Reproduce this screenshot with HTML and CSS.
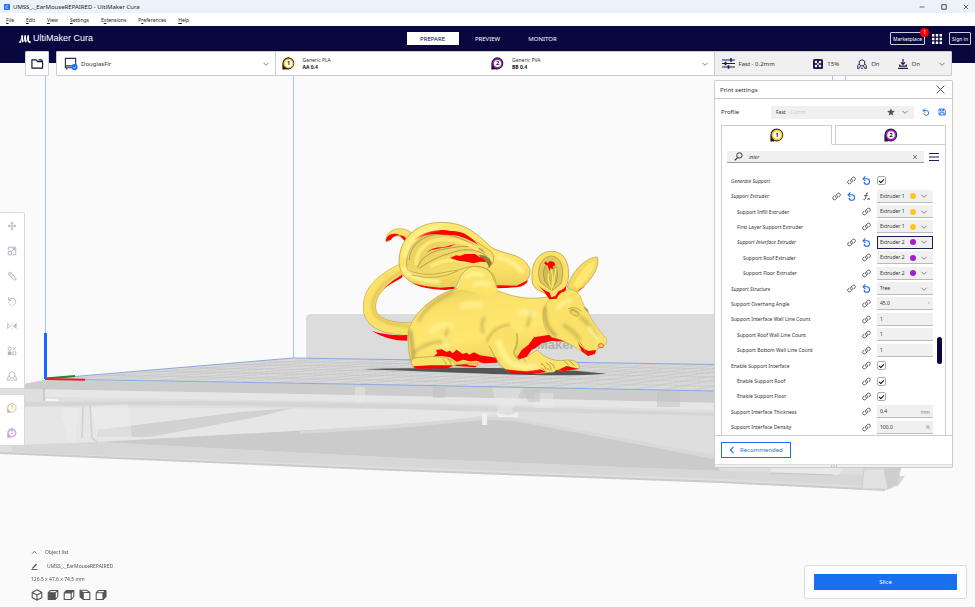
FILE: index.html
```html
<!DOCTYPE html>
<html lang="en">
<head>
<meta charset="utf-8">
<title>UMSS_._EarMouseREPAIRED - UltiMaker Cura</title>
<link rel="stylesheet" href="styles.css">
</head>
<body>
<svg class="defs" aria-hidden="true">
  <symbol id="chev" viewBox="0 0 8 8"><path d="M1.500 2.800 4 5.300 6.500 2.800" fill="none" stroke="#666" stroke-width=".8"/></symbol>
  <symbol id="link" viewBox="0 0 16 16"><g fill="none" stroke="#555" stroke-width="1.700" stroke-linecap="round"><path d="M7 9.800a3 3 0 0 1 0-4.200l3-3a3 3 0 0 1 4.200 4.200l-2 2"/><path d="M9 6.200a3 3 0 0 1 0 4.200l-3 3a3 3 0 0 1-4.200-4.200l2-2"/></g></symbol>
  <symbol id="undo" viewBox="0 0 16 16"><g fill="none" stroke="#1a6ef0" stroke-width="1.900"><path d="M2.500 5H8.500a4.900 4.900 0 1 1-4.900 5.500"/><path d="M6 .8 1.900 5 6 9.200"/></g></symbol>
  <symbol id="fx" viewBox="0 0 16 16"><path d="M11 2C7.500 1 7.500 4 7 7s-1 8-4.500 6.500M4 6.500h6M10 10.500l3.500 3.500M13.500 10.500 10 14" fill="none" stroke="#333" stroke-width="1.500"/></symbol>
  <symbol id="ext" viewBox="0 0 14 14"><path d="M7 .4A6.500 6.500 0 1 1 4 12.800V13.500H.4V7A6.600 6.600 0 0 1 7 .4Z" fill="#1c1c28"/><circle cx="7" cy="7" r="5.500" fill="currentColor"/><circle cx="7" cy="7" r="3.800" fill="#fff"/></symbol>
  <symbol id="cube" viewBox="0 0 12 12"><path d="M3.500 1.500h7.300v6L8.200 10.500H1.200V3.800ZM1.200 3.800h7v6.700M8.200 3.800l2.600-2.300" fill="none" stroke="#555" stroke-width="1.100" stroke-linejoin="round"/></symbol>
  <symbol id="arch" viewBox="0 0 14 14"><path d="M7 1 10.800 3v4L9 9.500H5L3.200 7V3ZM3.200 7 1 9v4M10.800 7 13 9v4M.5 13h3M5.500 13h3M10.500 13h3M3.500 12.500 5 9.500M10.500 12.500 9 9.500" fill="none" stroke="currentColor" stroke-width="1.300"/></symbol>
</svg>

<header class="titlebar">
  <svg class="app-icon" viewBox="0 0 6 6"><rect width="6" height="6" rx="1" fill="#1a6ef0"/><path d="M4.300 1.800H1.900v2.400h2.400" fill="none" stroke="#bcd6ff" stroke-width=".8"/></svg>
  <span>UMSS_._EarMouseREPAIRED - UltiMaker Cura</span>
  <div class="window-buttons">
    <button aria-label="Minimize"><svg viewBox="0 0 6 6"><path d="M.5 3h5" stroke="#333" stroke-width=".7"/></svg></button>
    <button aria-label="Maximize"><svg viewBox="0 0 6 6"><rect x=".8" y=".8" width="4.400" height="4.400" fill="none" stroke="#222" stroke-width=".8"/></svg></button>
    <button aria-label="Close"><svg viewBox="0 0 6 6"><path d="m.8.8 4.400 4.400M5.200.8.8 5.200" stroke="#222" stroke-width=".7"/></svg></button>
  </div>
</header>
<nav class="menubar">
  <a href="#"><u>F</u>ile</a><a href="#"><u>E</u>dit</a><a href="#"><u>V</u>iew</a><a href="#"><u>S</u>ettings</a><a href="#">E<u>x</u>tensions</a><a href="#">P<u>r</u>eferences</a><a href="#"><u>H</u>elp</a>
</nav>
<header class="topbar">
  <div class="brand">
    <svg viewBox="0 0 12 8"><g fill="none" stroke="#fff" stroke-width="1.700"><path d="M3.200.3v4.500q0 1.500 1 2.200M6.200.3v4.500q0 1.500 1 2.200M9.200.3v4.500q0 1.500 1 2.200"/><path d="M3.200 1 1.300 7M6.200 1 4.800 6M9.200 1 7.800 6" stroke-width=".9"/></g><circle cx="1.100" cy="6.900" r="1" fill="#fff"/><circle cx="10.900" cy="6.900" r="1" fill="#fff"/></svg>
    <span>UltiMaker Cura</span>
  </div>
  <nav class="stages"><button class="current">PREPARE</button><button>PREVIEW</button><button>MONITOR</button></nav>
  <div class="account">
    <button class="outline market">Marketplace<span class="badge">1</span></button>
    <button class="apps" aria-label="Applications"><svg viewBox="0 0 10 10" fill="#fff"><path d="M0 0h2.400v2.400H0zM3.800 0h2.400v2.400H3.800zM7.600 0H10v2.400H7.600zM0 3.800h2.400v2.400H0zM3.800 3.800h2.400v2.400H3.800zM7.600 3.800H10v2.400H7.600zM0 7.600h2.400V10H0zM3.800 7.600h2.400V10H3.800zM7.600 7.600H10V10H7.600z"/></svg></button>
    <button class="outline">Sign in</button>
  </div>
</header>

<main class="stage">
  <svg class="scene" viewBox="0 63 975 544" preserveAspectRatio="xMidYMid slice" role="img" aria-label="Build plate with model">
    <defs>
      <linearGradient id="body" x1="0" y1="0" x2=".35" y2="1"><stop offset="0" stop-color="#dcc75a"/><stop offset=".3" stop-color="#fbe169"/><stop offset=".7" stop-color="#ffe770"/><stop offset="1" stop-color="#ecd25b"/></linearGradient>
      <linearGradient id="earfill" x1="0" y1="0" x2="0" y2="1"><stop offset="0" stop-color="#ffe972"/><stop offset=".7" stop-color="#fbe066"/><stop offset="1" stop-color="#e6cc59"/></linearGradient>
      <linearGradient id="hollow" x1="0" y1="0" x2="1" y2="1"><stop offset="0" stop-color="#e2ca60"/><stop offset="1" stop-color="#fde46c"/></linearGradient>
      <filter id="soft" x="-20%" y="-20%" width="140%" height="140%"><feGaussianBlur stdDeviation="5"/></filter>
      <clipPath id="plate"><path d="M45 379 293 358 714 364.500V391L400 385Z"/></clipPath>
    </defs>
    <g fill="none" stroke="#9fc6f8" stroke-width="1"><path d="M45.500 76V336"/><path d="M293.500 76V358"/><path d="M832.500 76V90M845.500 76V90"/></g>
    <path d="M306 360V319q0-5 5-5H730v55Z" fill="#dcdcdc"/>
    <path d="M0 389 45 380 300 362 740 366V462L902 464 899 478Q896 490 885 490L870 490 720 482 395 470 0 453Z" fill="#dedede"/>
    <path d="M24 384 45 380 400 385 720 391V403L400 396 24 389Z" fill="#cdcdcd"/>
    <path d="M24 389 400 396 720 403V410L400 402 45 397Z" fill="#e6e6e6"/>
    <path d="M24 389H44V402H24Z" fill="#dedede"/><path d="M44 388V401" stroke="#b4b4b4"/>
    <path d="M46 398.500 56 399 60 401H46Z" fill="#f6f6f6"/>
    <path d="M24 402H60L200 401 400 404 720 413V416L400 409 200 405 24 406Z" fill="#d5d5d5"/>
    <path d="M24 407 400 409 500 413 400 427 110 443 24 446Z" fill="#e6e6e6"/>
    <path d="M97 430 240 412 292 408 262 416 150 437 97 437Z" fill="#d2d2d2"/>
    <path d="M500 412 720 417V460L640 445Z" fill="#dedede"/>
    <path d="M97 442 400 425 485 418 520 420 714 459 720 471 400 458Z" fill="#cbcbcb"/>
    <path d="M400 424 485 417 515 418 720 456V460L515 421 485 420 400 428 300 434V431Z" fill="#d8d8d8"/>
    <path d="M12 445 97 442 400 458 720 471 905 476 898 486 870 486 720 479 395 467 12 452Z" fill="#d7d7d7"/>
    <path d="M0 453 395 470 720 482 885 490" fill="none" stroke="#cbcbcb" stroke-width="2"/>
    <path d="M60 408H78L75 444 68 440ZM91 406 97 437 110 440 132 437 128 404Z" fill="#efefef" opacity=".4"/>
    <path d="M83 407 82 438M90 406 92 438 97 442" fill="none" stroke="#d0d0d0" stroke-width="1.500"/>
    <path d="M355 387H365V402H355ZM492 388 498 412H512L522 388ZM535 393H553V408H535Z" fill="#ececec" opacity=".45"/>
    <path d="M433 387H445V398H433ZM657 391H680V407H657ZM524 389H540V402H528Z" fill="#c2c2c2" opacity=".5"/>
    <path d="M482 413H487V425H482ZM496 412Q507 418 518 412V417H498Z" fill="#f0f0f0"/>
    <path d="M771 467H843Q842 476 833 475L771 473Z" fill="#e8e8e8"/><path d="M771 473 833 475" stroke="#c2c2c2"/>
    <path d="M864 469H884L888 489H862Z" fill="#e2e2e2" stroke="#d0d0d0"/>
    <path d="M884 466 901 468 897 484 888 489Z" fill="#cecece"/>
    <path d="M45 379 293 358 714 364.500V391L400 385Z" fill="#d8d8d8"/>
    <g clip-path="url(#plate)" fill="none" stroke="#bebebe" stroke-width=".5">
      <path d="M60 379.500 335 358M90 380 365 358M120 380 395 359M150 381 425 359M180 381 455 359M210 382 480 359M240 382 505 360M270 383 530 360M300 383 555 360M330 384 580 360M360 384 605 361M390 385 630 361M420 386 652 361M450 386 675 362M480 387 695 362M510 387 714 363M540 388 734 363M570 389 754 363M600 389 770 363M630 390 790 363M660 390 805 363M690 391 825 363"/>
      <path d="M92 375 714 386M139 371 714 381.500M181 367.500 714 377M220 364 714 373M255 361 714 369" stroke-dasharray="5 1"/>
    </g>
    <path d="M45 379 293 358 714 364.500M45 379 400 385 714 391" fill="none" stroke="#86aae0" stroke-width="1"/>
    <text class="plate-name" x="516" y="349">UltiMaker</text>
    <path d="M45 378.500 75 376" stroke="#1a8a2c" stroke-width="2"/>
    <path d="M45 379 85 379.700" stroke="#ea1c24" stroke-width="2"/>
    <path d="M45.500 333V379" stroke="#1769ff" stroke-width="3"/>

    <g transform="translate(350 210) scale(.33333)" stroke-linejoin="round">
      <path d="M38 478Q200 472 420 474T770 491Q650 500 430 492T38 478Z" fill="#555"/>
      <path d="M188 357C120 358 58 344 58 290C58 245 92 208 165 175" fill="none" stroke="#b5a04a" stroke-width="39"/>
      <path d="M188 357C120 358 58 344 58 290C58 245 92 208 165 175" fill="none" stroke="#fbe169" stroke-width="36"/>
      <path d="M180 348C120 345 70 330 68 290C68 250 100 215 160 184" fill="none" stroke="#d9c156" stroke-width="8" filter="url(#soft)"/>
      <path d="M65 362Q110 378 172 375V392Q110 392 65 362ZM100 237Q125 212 158 193L155 204Q120 222 100 237Z" fill="#f00"/>
      <path d="M108 96C103 62 150 42 184 68L164 92C145 70 130 75 122 90Z" fill="#fbe169" stroke="#b5a04a" stroke-width="2"/>
      <path d="M108 94C107 75 130 65 150 76Q130 76 122 90ZM148 76Q165 76 169 88L164 92Z" fill="#f00"/>
      <path d="M652 232C665 182 710 140 742 141C750 166 732 208 680 248Z" fill="#f2d960" stroke="#b5a04a" stroke-width="2"/>
      <path d="M670 225Q695 170 735 150Q740 180 683 235Z" fill="#ffe872"/><path d="M678 245Q700 232 712 222L690 240Z" fill="#f00"/>
      <path d="M310 462Q340 455 380 457L384 466 376 472 318 468Z" fill="#f00"/>
      <path d="M345 455 382 457 383 468 355 466Z" fill="#eed45a"/>
      <path d="M520 445 562 420C585 448 622 456 650 450C678 448 692 464 687 476L640 482 540 470Z" fill="#fce36a" stroke="#b5a04a" stroke-width="2"/>
      <path d="M624 480 650 468 675 474 687 477 640 483Z" fill="#f00"/>
      <path d="M330 232C260 250 200 298 178 352C172 390 174 440 190 468L250 470 420 456 500 440C545 425 555 395 605 385L610 258C560 268 500 270 430 236Z" fill="url(#body)" stroke="#b5a04a" stroke-width="2"/>
      <g filter="url(#soft)" fill="none"><path d="M205 335Q230 280 310 248M400 370Q390 340 404 320M190 430Q230 390 300 395M410 395Q430 350 480 345M290 390Q285 370 296 350M530 350Q545 320 540 300" stroke="#b19c48" stroke-width="8" opacity=".6"/><path d="M240 370Q270 330 310 350M330 290Q370 280 400 285M500 310Q530 300 560 315M450 370Q480 365 485 400M285 380Q290 400 290 415" stroke="#fff393" stroke-width="20" opacity=".7"/><path d="M180 360Q188 410 190 455" stroke="#b7a14c" stroke-width="9"/></g>
      <path d="M322 240C330 190 350 165 400 168C440 170 450 210 440 250L410 262Q360 235 322 240Z" fill="#fbe36a"/>
      <path d="M250 440 262 430 258 420 275 418 290 426 300 422 308 430 320 419 338 432 350 428 358 434 372 427 390 436 420 440 440 444 442 458 400 460 380 452 360 454 340 449 320 455 300 442 275 438Z" fill="#f00"/>
      <path d="M495 452 515 420 535 405 552 382 600 374 650 385 686 398 706 428 655 395 605 393 575 400 560 412 545 420 530 440Z" fill="#f00"/>
      <path d="M184 462C180 438 205 444 240 440C275 438 312 448 316 464L304 472 192 474Z" fill="#fae167" stroke="#b5a04a" stroke-width="2"/>
      <path d="M190 469 240 466 310 466 295 475 195 476Z" fill="#f00"/>
      <path d="M278 448Q288 455 290 466M293 446Q303 455 304 466" fill="none" stroke="#a28f3e" stroke-width="2"/>
      <path d="M416 405C420 360 480 335 500 365C508 395 484 425 506 448C530 462 570 452 600 456C622 462 624 478 612 486C570 492 520 492 485 487C450 478 440 440 416 405Z" fill="#fae067"/>
      <path d="M418 408C440 450 450 478 488 488C530 492 575 491 612 486" fill="none" stroke="#a99545" stroke-width="2"/>
      <path d="M462 478Q490 480 530 484L570 478 590 486 540 493 490 491Z" fill="#f00"/>
      <path d="M445 390Q455 440 490 464Q530 476 565 468" fill="none" stroke="#fff291" stroke-width="18" filter="url(#soft)"/>
      <path d="M500 370Q506 400 492 425Q492 440 510 450" fill="none" stroke="#b49f4a" stroke-width="5" opacity=".7"/>
      <path d="M573 460Q586 466 588 480M587 458Q602 465 604 480M598 457Q613 463 614 475M642 454Q655 460 657 470M656 452Q670 460 674 468M575 474l10 8M590 474l10 7" fill="none" stroke="#98863c" stroke-width="2"/>
      <path d="M608 258C640 230 676 232 690 258C700 280 705 298 716 310C732 345 756 370 769 386C774 402 758 414 742 416C737 432 716 438 700 428C670 408 640 388 605 382C570 345 570 290 608 258Z" fill="#fae168" stroke="#b5a04a" stroke-width="1.500"/>
      <path d="M586 290Q578 345 618 378" fill="none" stroke="#af9a48" stroke-width="7" filter="url(#soft)"/>
      <path d="M690 320Q730 350 740 390M640 345Q670 360 690 390" fill="none" stroke="#d4bd55" stroke-width="12" filter="url(#soft)"/>
      <path d="M620 300Q640 270 665 270M715 350Q735 380 745 392" fill="none" stroke="#fff291" stroke-width="12" filter="url(#soft)"/>
      <path d="M700 290Q716 292 716 310L706 300Z" fill="#b8a24a"/>
      <ellipse cx="674" cy="308" rx="15" ry="8" transform="rotate(25 674 308)" fill="#ecd25d" stroke="#ae9a46" stroke-width="2"/><path d="M664 301Q675 298 685 312" fill="none" stroke="#e4641c" stroke-width="1.500"/><path d="M655 297Q672 286 694 303" fill="none" stroke="#a08d40" stroke-width="2"/>
      <path d="M682 393Q692 415 715 423L738 420 735 432 714 438 695 424Z" fill="#f00"/><path d="M688 394Q700 408 708 430" fill="none" stroke="#98863c" stroke-width="2"/>
      <ellipse cx="753" cy="407" rx="8" ry="6" fill="#efd55f" stroke="#e3291a" stroke-width="2"/>
      <path d="M548 222C538 170 560 124 604 124C648 124 664 170 652 222C642 242 622 246 616 264L600 266C590 244 556 245 548 222Z" fill="#fae168" stroke="#a99545" stroke-width="2"/>
      <path d="M562 222Q580 242 598 247L604 262 616 258 626 243Q642 240 650 226L646 244Q628 247 620 266L598 268Q585 246 562 222Z" fill="#f00"/>
      <path d="M572 218C555 180 575 138 604 138C635 140 646 182 632 222L606 242Z" fill="#e0c95b" stroke="#a3903f" stroke-width="2"/>
      <path d="M585 215C575 185 582 160 602 158C620 162 628 190 618 218L606 238Z" fill="#d2ba53" stroke="#98863c" stroke-width="2"/>
      <path d="M604 180Q612 205 604 240M596 190Q592 210 602 232M618 175Q614 205 608 232" fill="none" stroke="#f8e468" stroke-width="4"/>
      <path d="M582 160 588 154 592 160 600 153 612 156 616 164 608 170 612 178 602 174 598 182 594 168Z" fill="#f00"/>
      <path d="M147 160C145 85 200 38 272 37C340 38 372 62 424 112C470 138 520 128 540 178C543 216 515 232 440 233L438 222C435 185 410 170 370 168C335 180 330 205 318 232L290 238C210 232 155 222 147 160Z" fill="url(#earfill)" stroke="#a99545" stroke-width="2"/>
      <path d="M172 180C160 115 205 65 285 65C345 68 385 98 425 126C438 148 428 168 410 176C370 160 340 176 325 180C290 184 245 200 205 190Q182 186 172 180Z" fill="url(#hollow)" stroke="#a99545" stroke-width="2"/>
      <path d="M178 150C178 110 215 72 275 73C330 76 372 104 404 128M203 172C215 140 245 122 290 116C330 108 370 104 400 122M208 175C230 160 260 140 300 130C350 110 400 120 420 150" fill="none" stroke="#9c8a40" stroke-width="3" opacity=".75"/>
      <path d="M198 165C198 120 232 86 285 88C330 90 360 105 385 118M240 170Q290 140 360 155" fill="none" stroke="#ffea74" stroke-width="12" opacity=".9"/>
      <path d="M192 90C215 64 270 54 300 63C340 62 360 78 384 104C345 82 325 73 280 74C245 67 215 78 192 90Z" fill="#f00"/>
      <path d="M230 128Q250 110 280 112L318 102 300 110 275 114 245 120ZM300 144 318 136 330 138 345 132 375 132 390 142 408 140 413 156 390 155 370 160 350 155 325 152Z" fill="#f00"/>
      <path d="M384 136Q410 130 426 158L418 174Q410 150 384 136Z" fill="#8d7d3c"/>
      <path d="M184 218Q220 230 270 233L312 230 314 236 285 240Q220 238 184 218ZM440 226 500 227 535 210Q528 228 500 232L443 235Z" fill="#f00"/>
      <path d="M160 170C164 195 200 212 270 215M440 140Q490 150 520 190M165 140C170 90 220 55 270 52" fill="none" stroke="#fff493" stroke-width="12" filter="url(#soft)"/>
      <path d="M185 195Q260 215 325 182M410 176Q428 190 434 215" fill="none" stroke="#b49f4a" stroke-width="3" opacity=".8"/>
      <path d="M345 205Q370 180 400 200M370 225Q390 215 425 225" fill="none" stroke="#fff291" stroke-width="14" filter="url(#soft)"/>
    </g>
  </svg>

  <div class="stagebar">
    <button class="open" aria-label="Open file"><svg viewBox="0 0 14 12"><path d="M1 10.500V1.500h4.500L7 3.500h5.500v7ZM8 1.500h3.500l1 2" fill="none" stroke="#0b0b40" stroke-width="1.200" stroke-linejoin="round"/></svg></button>
    <div class="config">
      <button class="printer">
        <svg class="printer-icon" viewBox="0 0 15 14"><path d="M1.500 1h11v10h-11ZM1.500 9h8M3 11v2M11 11v2" fill="none" stroke="#2b2b55" stroke-width="1.200"/><circle cx="11.300" cy="10.300" r="3.300" fill="#1a6ef0"/><path d="m9.900 10.300 1.100 1.100 1.800-2" fill="none" stroke="#fff" stroke-width=".8"/></svg>
        <span>DouglasFir</span><svg class="chev"><use href="#chev"/></svg>
      </button>
      <button class="extruders">
        <span class="extruder"><svg class="ext yellow" viewBox="0 0 14 14"><use href="#ext"/><text x="7" y="9">1</text></svg><span>Generic PLA<br><b>AA 0.4</b></span></span>
        <span class="extruder"><svg class="ext purple" viewBox="0 0 14 14"><use href="#ext"/><text x="7" y="9">2</text></svg><span>Generic PVA<br><b>BB 0.4</b></span></span>
        <svg class="chev"><use href="#chev"/></svg>
      </button>
      <button class="summary">
        <svg class="sliders" viewBox="0 0 13 11"><path d="M0 2h13M0 5.500h13M0 9h13" stroke="#1c1c50" stroke-width="1.200"/><path d="M9 .3v3.400M3.500 3.800v3.400M6.500 7.300v3.400" stroke="#1c1c50" stroke-width="1.800"/></svg>
        <span class="quality">Fast - 0.2mm</span>
        <svg class="sum" viewBox="0 0 10 10"><rect width="10" height="10" rx="1.500" fill="#1c1c50"/><g fill="#fff"><circle cx="3" cy="3" r="1.200"/><circle cx="7" cy="3" r="1.200"/><circle cx="5" cy="5" r=".9"/><circle cx="3" cy="7" r="1.200"/><circle cx="7" cy="7" r="1.200"/></g></svg><span class="infill">15%</span>
        <svg class="sum dark"><use href="#arch"/></svg><span class="onoff">On</span>
        <svg class="sum" viewBox="0 0 12 12"><path d="M6 0v6M3.500 4 6 6.500 8.500 4M2 6.500v2h8v-2M0 11.200h12" fill="none" stroke="#1c1c50" stroke-width="1.400"/></svg><span>On</span>
        <svg class="chev"><use href="#chev"/></svg>
      </button>
    </div>
  </div>

  <div class="workspace">
    <aside class="tools">
      <div class="toolbox">
        <button aria-label="Move"><svg viewBox="0 0 12 12"><path d="M6 2v8M2 6h8" stroke="#b4b4c6" stroke-width="1.200"/><path d="m6 .5 2 2.500H4ZM6 11.500 4 9h4ZM.5 6 3 4v4ZM11.500 6 9 8V4Z" fill="#b4b4c6"/></svg></button>
        <button aria-label="Scale"><svg viewBox="0 0 12 12" fill="none" stroke="#b4b4c6" stroke-width="1.200"><path d="M1.500 5V1.500h9v9H7M1.500 6.500h4v4h-4ZM6 6l3-3M6.500 3H9v2.500"/></svg></button>
        <button aria-label="Paint"><svg viewBox="0 0 12 12" fill="none" stroke="#b4b4c6" stroke-width="1.200"><path d="M1 3.500 4 1l3.500 4L5 7.500ZM5 7.500l4.500 3.700L11 9.500 7.500 5M2.500 5.200 5.500 2.700"/></svg></button>
        <button aria-label="Rotate"><svg viewBox="0 0 12 12" fill="none" stroke="#b4b4c6" stroke-width="1.200"><path d="M2 1.500V5h3.500M2 5a4.500 4.500 0 0 1 8.500 1.500"/><path d="M10.500 6.500a4.500 4.500 0 0 1-9 .5" stroke-dasharray="1.500 1"/></svg></button>
        <button aria-label="Mirror"><svg viewBox="0 0 12 12"><path d="M.8 3v6L4 6Z" fill="none" stroke="#b4b4c6"/><path d="M11.500 2.500v7L7.500 6Z" fill="#b4b4c6"/><path d="M6 1v10" stroke="#b4b4c6" stroke-width=".8" stroke-dasharray="1.500 1"/></svg></button>
        <button aria-label="Per model settings"><svg viewBox="0 0 12 12" fill="none" stroke="#b4b4c6"><path d="M1.500 1.500h3.500v3.500H1.500ZM7 1.500l3.500 3.500M7 5l3.500-3.500M7 7h3.500v3.500H7Z"/><path d="M1 6.500h4.500V11H1Z" fill="#b4b4c6" stroke="none"/></svg></button>
        <button class="muted" aria-label="Support blocker"><svg><use href="#arch"/></svg></button>
      </div>
      <div class="toolbox faded">
        <button aria-label="Extruder 1"><svg class="yellow" viewBox="0 0 14 14"><use href="#ext"/><text x="7" y="9">1</text></svg></button>
        <button aria-label="Extruder 2"><svg class="purple" viewBox="0 0 14 14"><use href="#ext"/><text x="7" y="9">2</text></svg></button>
      </div>
    </aside>

    <section class="panel">
      <header class="panel-head"><h2>Print settings</h2><button aria-label="Close panel"><svg viewBox="0 0 8 8"><path d="m.5.500 7 7M7.500.5l-7 7" stroke="#444" stroke-width=".8"/></svg></button></header>
      <div class="profile">
        <label for="profile">Profile</label>
        <button id="profile" class="profile-box"><span>Fast <i>- 0.2mm</i></span><svg viewBox="0 0 10 10"><path d="m5 .5 1.400 3 3.300.4-2.500 2.200.7 3.300L5 7.800 2.100 9.400l.7-3.300L.3 3.900l3.300-.4Z" fill="#555"/></svg><svg><use href="#chev"/></svg></button>
        <button aria-label="Discard changes"><svg><use href="#undo"/></svg></button>
        <button aria-label="Save profile"><svg viewBox="0 0 16 16"><path d="M2 2h10l2.500 2.500V14H2ZM5 2v4h6V2M4.500 14V9.500h7.500V14M8.500 3v2" fill="none" stroke="#1a6ef0" stroke-width="1.700"/></svg></button>
      </div>
      <div class="tabs">
        <button class="active" aria-label="Extruder 1"><svg class="ext yellow" viewBox="0 0 14 14"><use href="#ext"/><text x="7" y="9">1</text></svg></button>
        <button aria-label="Extruder 2"><svg class="ext purple" viewBox="0 0 14 14"><use href="#ext"/><text x="7" y="9">2</text></svg></button>
      </div>
      <div class="settings">
        <div class="search">
          <label class="search-box"><svg viewBox="0 0 10 10"><circle cx="6" cy="3.800" r="3" fill="none" stroke="#222" stroke-width="1"/><path d="M4 6.200.8 9.200" stroke="#222" stroke-width="1.200"/></svg><input type="text" value="inter" aria-label="Search settings"><svg class="clear" viewBox="0 0 8 8"><path d="m2 2 4 4M6 2 2 6" stroke="#555" stroke-width=".8"/></svg></label>
          <button aria-label="Setting visibility"><svg viewBox="0 0 10 10"><path d="M0 1.500h10M0 5h10M0 8.500h10" stroke="#1c1c50" stroke-width="1.200"/></svg></button>
        </div>
        <div class="list-wrap">
          <div class="list">
            <div class="row changed"><label for="s1">Generate Support</label><svg><use href="#link"/></svg><svg><use href="#undo"/></svg><span class="field"><input id="s1" type="checkbox" checked></span></div>
            <div class="row changed"><label for="s2">Support Extruder</label><svg><use href="#link"/></svg><svg><use href="#undo"/></svg><svg><use href="#fx"/></svg><span class="field pick one"><select id="s2"><option>Extruder 1</option></select><svg><use href="#chev"/></svg></span></div>
            <div class="row in1"><label for="s3">Support Infill Extruder</label><svg><use href="#link"/></svg><span class="field pick one"><select id="s3"><option>Extruder 1</option></select><svg><use href="#chev"/></svg></span></div>
            <div class="row in1"><label for="s4">First Layer Support Extruder</label><svg><use href="#link"/></svg><span class="field pick one"><select id="s4"><option>Extruder 1</option></select><svg><use href="#chev"/></svg></span></div>
            <div class="row in1 changed"><label for="s5">Support Interface Extruder</label><svg><use href="#link"/></svg><svg><use href="#undo"/></svg><span class="field pick two focus"><select id="s5"><option>Extruder 2</option></select><svg><use href="#chev"/></svg></span></div>
            <div class="row in2"><label for="s6">Support Roof Extruder</label><svg><use href="#link"/></svg><span class="field pick two"><select id="s6"><option>Extruder 2</option></select><svg><use href="#chev"/></svg></span></div>
            <div class="row in2"><label for="s7">Support Floor Extruder</label><svg><use href="#link"/></svg><span class="field pick two"><select id="s7"><option>Extruder 2</option></select><svg><use href="#chev"/></svg></span></div>
            <div class="row changed"><label for="s8">Support Structure</label><svg><use href="#link"/></svg><svg><use href="#undo"/></svg><span class="field pick"><select id="s8"><option>Tree</option></select><svg><use href="#chev"/></svg></span></div>
            <div class="row"><label for="s9">Support Overhang Angle</label><svg><use href="#link"/></svg><span class="field"><input id="s9" type="text" value="45.0"><em>°</em></span></div>
            <div class="row"><label for="s10">Support Interface Wall Line Count</label><svg><use href="#link"/></svg><span class="field"><input id="s10" type="text" value="1"></span></div>
            <div class="row in1"><label for="s11">Support Roof Wall Line Count</label><svg><use href="#link"/></svg><span class="field"><input id="s11" type="text" value="1"></span></div>
            <div class="row in1"><label for="s12">Support Bottom Wall Line Count</label><svg><use href="#link"/></svg><span class="field"><input id="s12" type="text" value="1"></span></div>
            <div class="row"><label for="s13">Enable Support Interface</label><svg><use href="#link"/></svg><span class="field"><input id="s13" type="checkbox" checked></span></div>
            <div class="row in1"><label for="s14">Enable Support Roof</label><svg><use href="#link"/></svg><span class="field"><input id="s14" type="checkbox" checked></span></div>
            <div class="row in1"><label for="s15">Enable Support Floor</label><svg><use href="#link"/></svg><span class="field"><input id="s15" type="checkbox" checked></span></div>
            <div class="row"><label for="s16">Support Interface Thickness</label><svg><use href="#link"/></svg><span class="field"><input id="s16" type="text" value="0.4"><em>mm</em></span></div>
            <div class="row"><label for="s17">Support Interface Density</label><svg><use href="#link"/></svg><span class="field"><input id="s17" type="text" value="100.0"><em>%</em></span></div>
          </div>
          <div class="scroll"><span></span></div>
        </div>
      </div>
      <footer class="panel-foot"><button><svg viewBox="0 0 8 8"><path d="M5.500.8 2.300 4l3.200 3.200" fill="none" stroke="#1a6ef0" stroke-width="1.100"/></svg>Recommended</button></footer>
      <div class="grip"><svg viewBox="0 0 6 2"><path d="M0 1h1M2.500 1h1M5 1h1" stroke="#999"/></svg></div>
    </section>
  </div>

  <footer class="bottom">
    <div class="object">
      <button class="line"><svg viewBox="0 0 8 8"><path d="M1.200 5.400 4 2.600l2.800 2.800" fill="none" stroke="#555" stroke-width=".9"/></svg>Object list</button>
      <div class="line name"><svg viewBox="0 0 8 8"><path d="M1.500 5.500 5.800.8l1 1-4.200 4.400-1.400.3Z" fill="#444"/><path d="M.5 7.500h7" stroke="#444"/></svg>UMSS_._EarMouseREPAIRED</div>
      <div class="line size">126.5 x 47.6 x 74.5 mm</div>
      <div class="views">
        <button aria-label="3D view"><svg viewBox="0 0 12 12"><path d="M6 .8 10.800 3.400v5.200L6 11.200 1.200 8.600V3.400ZM6 6v5M6 6 1.200 3.400M6 6l4.800-2.600" fill="none" stroke="#555" stroke-width="1.100"/></svg></button>
        <button aria-label="Front view"><svg viewBox="0 0 12 12"><use href="#cube"/><path d="M1.200 3.800h7v6.700h-7Z" fill="#555"/></svg></button>
        <button aria-label="Top view"><svg viewBox="0 0 12 12"><use href="#cube"/><path d="m1.200 3.800 2.300-2.300h7.300L8.200 3.800Z" fill="#555" stroke="#555"/></svg></button>
        <button aria-label="Left view"><svg viewBox="0 0 12 12"><path d="M4.500 3.500h6.300v7H4.500L1.200 8V1.200h6.500l3.100 2.300" fill="none" stroke="#555" stroke-width="1.100"/><path d="m1.200 1.200 3.300 2.300v7L1.200 8Z" fill="#555" stroke="#555" stroke-width=".6"/></svg></button>
        <button aria-label="Right view"><svg viewBox="0 0 12 12"><use href="#cube"/><path d="m8.200 3.800 2.600-2.300v6l-2.600 3Z" fill="#555" stroke="#555"/></svg></button>
      </div>
    </div>
    <div class="slice"><button>Slice</button></div>
  </footer>
</main>
</body>
</html>
```
FILE: styles.css
```css
* { box-sizing: border-box; }
body {
  margin: 0;
  min-height: 100vh;
  display: flex;
  flex-direction: column;
  font: 5px/8px "Noto Sans", "Open Sans", sans-serif;
  color: #333;
  background: #fafafa;
}
button, input, select { font: inherit; color: inherit; margin: 0; padding: 0; border: 0; background: none; border-radius: 0; }
button { display: flex; align-items: center; text-align: left; }
a { color: inherit; text-decoration: none; }
svg { display: block; flex: none; width: 10px; height: 10px; }
.defs { position: absolute; width: 0; height: 0; }
svg text { font: bold 6px "Noto Sans", sans-serif; text-anchor: middle; fill: #111; }
.yellow { color: #ffc61e; }
.purple { color: #a21fce; }
.chev { width: 8px; height: 8px; }

.titlebar { display: flex; align-items: center; height: 13px; padding: 0 6px 0 4px; gap: 3px; background: #ecf2fa; font-size: 6px; color: #222; }
.app-icon { width: 6px; height: 6px; }
.window-buttons { display: flex; gap: 16px; margin-left: auto; }
.window-buttons svg { width: 6px; height: 6px; }
.menubar { display: flex; align-items: center; gap: 12px; height: 13px; padding: 0 6px; background: #fff; color: #222; }
.topbar { display: grid; grid-template-columns: 1fr auto 1fr; align-items: start; height: 37px; padding: 6px 4px 0 19px; background: #08073f; color: #fff; }
.brand { display: flex; align-items: center; gap: 2px; height: 13px; font: 9px/13px "Liberation Sans", sans-serif; }
.brand svg { width: 12px; height: 8px; }
.stages { display: flex; gap: 3px; margin-right: 15px; font-size: 6px; }
.stages button { width: 52px; height: 13px; justify-content: center; }
.stages .current { background: #fff; color: #08073f; }
.account { display: flex; justify-content: flex-end; align-items: center; height: 13px; gap: 7px; }
.outline { position: relative; height: 13px; padding: 0 2px; border: 1px solid #ccccdc; border-radius: 1px; }
.badge { position: absolute; top: -5px; right: -5px; width: 9px; height: 9px; border-radius: 50%; background: #f00; text-align: center; line-height: 9px; }

.stage { position: relative; flex: 1; display: flex; flex-direction: column; }
.scene { position: absolute; inset: 0; width: 100%; height: 100%; }
.scene .plate-name { font: bold 13px "Liberation Sans", sans-serif; text-anchor: start; fill: #b0b0b0; }
.stagebar, .workspace, .bottom { position: relative; }
.stagebar { display: flex; gap: 7px; height: 25px; margin-top: -12px; padding: 0 23px 0 25px; font-size: 6px; }
.open { width: 24px; justify-content: center; background: #fff; border: 1px solid #d2d2d2; border-radius: 1px; }
.open svg { width: 13px; height: 12px; }
.config { flex: 1; display: grid; grid-template-columns: minmax(0, 219fr) minmax(0, 439fr) minmax(0, 238fr); background: #fff; border: 1px solid #ccc; border-radius: 1px; }
.printer { padding: 0 5px 0 7px; gap: 3px; border-right: 1px solid #ccc; }
.printer-icon { width: 14px; height: 14px; }
.printer .chev { margin-left: auto; }
.extruders { padding: 0 5px 0 6px; font-size: 5px; line-height: 7px; }
.extruder { flex: 1; display: flex; align-items: center; gap: 8px; }
.extruder svg { width: 13px; height: 13px; }
.extruder b { font-weight: 700; color: #111; }
.summary { padding: 0 5px 0 7px; background: #f0f0f0; border-left: 1px solid #ccc; }
.sliders { width: 13px; height: 11px; margin-right: 4px; }
.quality { flex: 1; }
.sum { margin-right: 4px; }
.sum.dark { color: #1c1c50; }
.infill, .onoff { margin-right: 18px; }
.summary .chev { margin-left: 18px; }

.workspace { display: flex; justify-content: space-between; align-items: flex-start; margin-top: 4px; }
.tools { margin-top: 133px; }
.toolbox { width: 24px; margin-bottom: 7px; background: #fff; border-radius: 0 1px 1px 0; box-shadow: 0 0 0 1px #d8d8d8; }
.toolbox button { width: 24px; height: 25px; justify-content: center; }
.toolbox.faded svg { opacity: .35; }
.toolbox .muted { color: #b4b4c6; }

.panel { width: 239px; margin-right: 22px; background: #fff; border: 1px solid #ccc; border-radius: 1px; }
.panel-head { display: flex; align-items: center; justify-content: space-between; height: 18px; padding: 0 7px 0 5px; border-bottom: 1px solid #ccc; }
.panel-head h2 { margin: 0; font: 6px/8px "Noto Sans", sans-serif; }
.panel-head svg { width: 9px; height: 9px; }
.profile { display: flex; align-items: center; gap: 8px; height: 26px; padding: 0 6px; font-size: 6px; }
.profile label { flex: 1; }
.profile-box { width: 143px; height: 13px; padding: 0 5px; gap: 6px; background: #f0f0f0; font-size: 5px; }
.profile-box span { flex: 1; }
.profile-box i { font-style: normal; color: #ccc; }
.profile svg { width: 8px; height: 8px; }
.tabs { display: flex; gap: 3px; padding: 0 6px; }
.tabs button { flex: 1; height: 20px; justify-content: center; border: 1px solid #ccc; border-radius: 1px 1px 0 0; margin-bottom: -1px; background: #fff; }
.tabs .active { position: relative; z-index: 1; border-bottom-color: #fff; }
.tabs svg { width: 14px; height: 14px; }
.settings { margin: 0 6px; padding: 6px 3px 0 5px; border: 1px solid #ccc; border-bottom: 0; }
.search { display: flex; gap: 5px; height: 12px; margin-right: 3px; }
.search-box { flex: 1; display: flex; align-items: center; gap: 6px; padding: 0 5px 0 7px; background: #f0f0f0; border-bottom: 1px solid #999; font-style: italic; }
.search-box svg { width: 9px; height: 9px; }
.search-box .clear { width: 8px; height: 8px; }
.search-box input { flex: 1; min-width: 0; }
.list-wrap { display: flex; gap: 4px; margin-top: 10px; padding-left: 4px; }
.list { flex: 1; display: grid; grid-auto-rows: 1fr; min-height: 262px; }
.row { display: flex; align-items: center; gap: 6px; }
.row > label { flex: 1; }
.row > svg { width: 9px; height: 9px; }
.row.changed > label { font-style: italic; }
.in1 { padding-left: 6px; }
.in2 { padding-left: 12px; }
.field { position: relative; display: flex; align-items: center; width: 56px; height: 13px; }
.field input[type="text"], .field select { width: 100%; height: 13px; padding: 0 3px; background: #f0f0f0; border-bottom: 1px solid #bbb; appearance: none; }
.field em { position: absolute; right: 3px; font-style: normal; color: #888; }
.field input[type="checkbox"] { appearance: none; width: 9px; height: 9px; border: 1px solid #aaa; border-radius: 2px; background: #fff; display: grid; place-items: center; }
.field input:checked::before { content: ""; width: 4px; height: 2px; border: solid #111; border-width: 0 0 1px 1px; transform: rotate(-45deg); }
.pick svg { position: absolute; right: 5px; width: 8px; height: 8px; pointer-events: none; }
.one::after, .two::after { content: ""; position: absolute; right: 17px; width: 6px; height: 6px; border-radius: 50%; background: #ffc61e; }
.two::after { background: #a21fce; }
.field.focus select { height: 13px; border: 1px solid #1c1c50; padding: 0 2px; }
.scroll { width: 5px; display: flex; flex-direction: column; }
.scroll::before { content: ""; flex: 164; }
.scroll span { flex: 27; border-radius: 3px; background: #08073f; }
.scroll::after { content: ""; flex: 71; }
.panel-foot { padding: 6px; border-top: 1px solid #ccc; }
.panel-foot button { height: 16px; width: 70px; gap: 4px; padding: 0 6px; border: 1px solid #1a6ef0; color: #1a6ef0; font-size: 6px; }
.panel-foot svg { width: 8px; height: 8px; }
.grip { display: flex; justify-content: center; align-items: center; height: 3px; background: #f0f0f0; border-top: 1px solid #ddd; }
.grip svg { width: 6px; height: 2px; }

.bottom { display: flex; justify-content: space-between; align-items: flex-end; margin-top: auto; padding: 0 8px 6px 31px; }
.line { display: flex; align-items: center; height: 12px; gap: 7px; color: #555; }
.line svg { width: 7px; height: 7px; }
.name { height: 16px; gap: 9px; }
.size { height: 10px; }
.views { display: flex; gap: 4px; margin-top: 5px; }
.views svg { width: 12px; height: 12px; }
.slice { width: 163px; margin-bottom: 2px; padding: 8px 9px; background: #fff; border: 1px solid #ddd; border-radius: 2px; }
.slice button { width: 100%; height: 16px; justify-content: center; background: #1a6ef0; color: #fff; font-size: 6px; }
```
